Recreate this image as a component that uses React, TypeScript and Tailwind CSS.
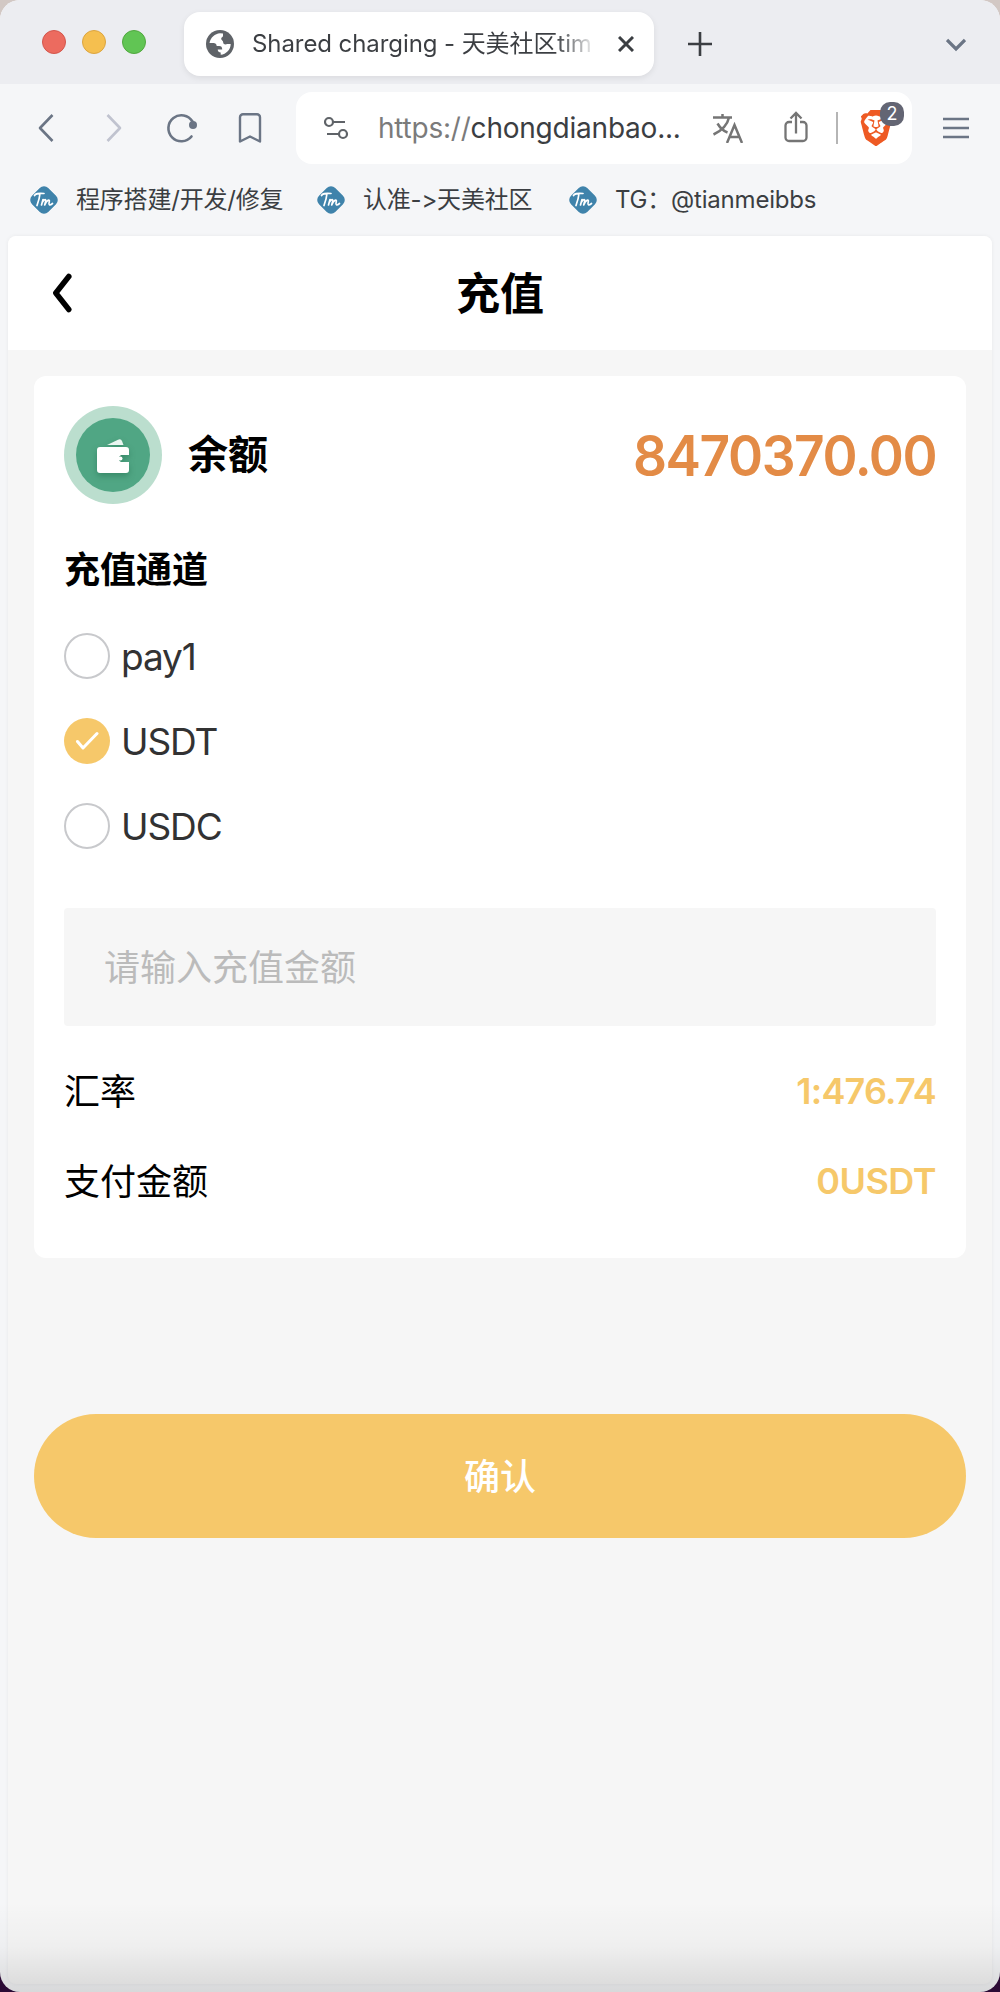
import { SiBrave } from 'react-icons/si'

const bookmarks = [
  { label: '程序搭建/开发/修复', width: 'w-[287px]' },
  { label: '认准->天美社区', width: 'w-[252px]' },
  { label: 'TG：@tianmeibbs', width: 'w-[260px]' },
]

const channels = ['pay1', 'USDT', 'USDC']
const selected = 'USDT'

function TmLogo() {
  return (
    <svg width="32" height="32" viewBox="0 0 32 32" className="shrink-0">
      <rect x="4.500" y="4.500" width="23" height="23" rx="6" fill="#3f83ab" transform="rotate(45 16 16)" />
      <g fill="none" stroke="#fff" strokeWidth="1.700" strokeLinecap="round" strokeLinejoin="round">
        <path d="M6.500 11.500c1-2 3-2.300 9.500-2M12 9.500c-.4 4-1.500 8-3 12" />
        <path d="M15 15.500l-1.500 5.500M14.500 18c2-3.500 4-3 3 0l-.8 3c2-5 5.500-6.500 4.500-3-.8 3 .3 4 3.300 1.500" />
      </g>
    </svg>
  )
}

function TabBar() {
  return (
    <div className="flex h-[84px] items-center bg-[#ecedf1] pl-[42px] pr-[34px]">
      <div className="flex w-[142px] gap-4">
        <span className="size-6 rounded-full border border-[#d3564c] bg-[#ec6b5f]" />
        <span className="size-6 rounded-full border border-[#dca540] bg-[#f5bf4f]" />
        <span className="size-6 rounded-full border border-[#51a83f] bg-[#61c554]" />
      </div>
      <div className="mt-1 flex h-16 w-[470px] items-center rounded-2xl bg-white pl-[22px] shadow-[0_2px_6px_rgba(0,0,0,0.08)]">
        <svg width="28" height="28" viewBox="0 0 28 28" className="mr-[18px] shrink-0">
          <circle cx="14" cy="14" r="14" fill="#5f6368" />
          <path
            d="M3.500 13C4.500 7.500 9 3.700 14 3.300l3 .2v2.300c0 1.500-1.800 1.500-1.800 3 0 1.700 2 1.700 2 3.700 0 2 2.500 2.500 4 1.500h3.500c0 5.500-4.500 10.300-10 10.800v-2.300c-1.600 0-3-1-3-3h4.500c0-2.500-1-3.500-3-3.500h-2.500c0-2-1.500-3-3.200-3z"
            fill="#fff"
          />
        </svg>
        <div className="w-[344px] whitespace-nowrap bg-gradient-to-r from-[#3b3e42] from-88% to-white bg-clip-text text-[24px] leading-8 tracking-[-0.080px] text-transparent">
          Shared charging - 天美社区tim
        </div>
        <svg width="16" height="16" viewBox="0 0 16 16" fill="none" stroke="#3b3e42" strokeWidth="3" className="ml-[22px] shrink-0">
          <path d="M1 1l14 14M15 1L1 15" />
        </svg>
      </div>
      <svg width="24" height="24" viewBox="0 0 24 24" fill="none" stroke="#3b3e42" strokeWidth="2.600" className="ml-[34px] mt-1">
        <path d="M12 0v24M0 12h24" />
      </svg>
      <svg width="20" height="14" viewBox="0 0 20 14" fill="none" stroke="#6b7585" strokeWidth="3.300" className="ml-auto mt-[6px]">
        <path d="M1 2l9 9 9-9" />
      </svg>
    </div>
  )
}

function Toolbar() {
  return (
    <div className="flex h-[88px] items-center pl-[38px] pr-[30px]">
      <svg width="16" height="28" viewBox="0 0 16 28" fill="none" stroke="#6b7585" strokeWidth="2.600" strokeLinejoin="round">
        <path d="M14.500 1L2 14l12.500 13" />
      </svg>
      <svg width="16" height="28" viewBox="0 0 16 28" fill="none" stroke="#c0c3cf" strokeWidth="2.600" strokeLinejoin="round" className="ml-[52px]">
        <path d="M1.500 1L14 14 1.500 27" />
      </svg>
      <svg width="32" height="30" viewBox="0 0 32 30" fill="none" stroke="#6b7585" strokeWidth="2.600" className="ml-[44px]">
        <path d="M25.500 23.500A13 13 0 1 1 26.500 8.500" strokeLinecap="round" />
        <circle cx="27" cy="12" r="4" fill="#6b7585" stroke="none" />
      </svg>
      <svg width="24" height="32" viewBox="0 0 24 32" fill="none" stroke="#6b7585" strokeWidth="2.400" strokeLinejoin="round" className="ml-[40px]">
        <path d="M5 2.200h14a3 3 0 0 1 3 3V29.500L12 24.500 2 29.500V5.200a3 3 0 0 1 3-3z" />
      </svg>

      <div className="ml-[34px] flex h-[72px] w-[616px] items-center rounded-2xl bg-white pl-7">
        <svg width="26" height="24" viewBox="0 0 26 24" fill="none" stroke="#5f6368" strokeWidth="2.200" className="shrink-0">
          <circle cx="5" cy="6" r="4" />
          <path d="M9 6h12M3 18h12" />
          <circle cx="19" cy="18" r="4" />
        </svg>
        <div className="ml-7 w-[314px] whitespace-nowrap text-[28px] tracking-[-0.220px] text-[#3b3e42]">
          <span className="text-[#7b7b7b]">https://</span>chongdianbao...
        </div>
        <svg width="32" height="30" viewBox="0 0 32 30" fill="none" stroke="#757575" strokeWidth="2.500" className="ml-[20px] shrink-0">
          <path d="M1 4.500h19M10.500 1v3.500M5.500 10.500c3 5 6 7.500 10 9M17 4.500c-1.500 7-7 13-15.500 17" />
          <path d="M15 30l7.500-18L30 30M17.500 24h10" />
        </svg>
        <svg width="24" height="32" viewBox="0 0 24 32" fill="none" stroke="#757575" strokeWidth="2.300" className="-mt-[2px] ml-[40px] shrink-0">
          <path d="M8 11H5a3.500 3.500 0 0 0-3.500 3.500v12A3.500 3.500 0 0 0 5 30h14a3.500 3.500 0 0 0 3.500-3.500v-12A3.500 3.500 0 0 0 19 11h-3" />
          <path d="M12 22.500V2.500M6.500 7.500L12 2l5.500 5.500" />
        </svg>
        <span className="ml-[28px] h-8 w-[2px] shrink-0 bg-[#b5b5b5]" />
        <div className="relative ml-[20px] shrink-0">
          <SiBrave size={36} color="#ee5a24" />
          <span className="absolute -top-[8px] left-[22px] flex h-6 w-6 items-center justify-center rounded-[10px] bg-[#636573] text-[18px] leading-none text-white">
            2
          </span>
        </div>
      </div>

      <svg width="28" height="22" viewBox="0 0 28 22" fill="none" stroke="#6b7585" strokeWidth="2.400" className="ml-auto">
        <path d="M1 2h26M1 11h26M1 20h26" />
      </svg>
    </div>
  )
}

function Header() {
  return (
    <div className="flex h-[114px] items-center justify-between rounded-t-lg bg-white px-[44px]">
      <svg width="20" height="40" viewBox="0 0 20 40" fill="none" stroke="#000" strokeWidth="5.500" strokeLinecap="round" strokeLinejoin="round">
        <path d="M16.800 3.500L3.800 20l13 16.500" />
      </svg>
      <h1 className="pt-[2px] text-[44px] font-bold text-black">充值</h1>
      <span className="w-5" />
    </div>
  )
}

function Wallet() {
  return (
    <div className="flex size-[98px] items-center justify-center rounded-full bg-[#bbdece]">
      <div className="flex size-[74px] items-center justify-center rounded-full bg-[#50a684]">
        <svg width="32" height="34" viewBox="0 0 32 34" className="mt-[2px] overflow-visible drop-shadow-[0_3px_3px_rgba(0,70,40,0.3)]">
          <path d="M10 6l11-5.300q3-1.200 4 1.300l1.500 4z" fill="#eaf6f1" />
          <path d="M3 8h26a3 3 0 0 1 3 3v5h-8a4 4 0 0 0 0 7h8v8a3 3 0 0 1-3 3H3a3 3 0 0 1-3-3V11a3 3 0 0 1 3-3z" fill="#fff" />
          <circle cx="23.500" cy="19.500" r="2" fill="#fff" />
        </svg>
      </div>
    </div>
  )
}

function Channel({ name, checked }: { name: string; checked: boolean }) {
  return (
    <div className="flex h-[46px] items-center gap-[11px]">
      {checked ? (
        <span className="flex size-[46px] items-center justify-center rounded-full bg-[#f6c86a]">
          <svg width="24" height="20" viewBox="0 0 24 20" fill="none" stroke="#fff" strokeWidth="3" strokeLinecap="round" strokeLinejoin="round">
            <path d="M2.500 10.500l5.500 6.500L22 2.500" />
          </svg>
        </span>
      ) : (
        <span className="size-[46px] rounded-full border-2 border-[#c8c9cc]" />
      )}
      <span className="text-[37px] tracking-[-1.100px] text-[#323233]">{name}</span>
    </div>
  )
}

export default function App() {
  return (
    <div className="h-[1992px] w-[1000px] overflow-hidden bg-[linear-gradient(#d2c8c4_50%,#2b0a35_50%)] font-[Inter,'Noto_Sans_CJK_SC',sans-serif] leading-none [font-feature-settings:'calt'_0]">
      <div className="relative flex h-full flex-col overflow-hidden rounded-[20px] bg-[#f5f6f8]">
        <TabBar />
        <Toolbar />
        <div className="flex h-16 items-center pb-2 pl-7 text-[24px] tracking-[-0.200px] text-[#3b3e42]">
          {bookmarks.map((b) => (
            <div key={b.label} className={`flex items-center gap-4 whitespace-nowrap ${b.width}`}>
              <TmLogo />
              <span>{b.label}</span>
            </div>
          ))}
        </div>

        <main className="mx-2 mb-2 flex-1 rounded-lg bg-[#f6f6f6] shadow-[0_0_4px_rgba(0,0,0,0.06)]">
          <Header />
          <section className="mx-[26px] mt-[26px] h-[882px] rounded-xl bg-white px-[30px] pt-[30px]">
            <div className="flex items-center">
              <Wallet />
              <span className="ml-[26px] text-[40px] font-bold text-black">余额</span>
              <span className="ml-auto origin-right scale-x-95 pt-px text-[56px] font-semibold tracking-[-1.500px] text-[#e38b46]">
                8470370.00
              </span>
            </div>
            <h2 className="mt-[48px] text-[36px] font-bold leading-[36px] text-black">充值通道</h2>
            <div className="mt-[45px] flex flex-col gap-[39px]">
              {channels.map((c) => (
                <Channel key={c} name={c} checked={c === selected} />
              ))}
            </div>
            <input
              className="mt-[59px] h-[118px] w-full rounded bg-[#f6f6f6] px-10 pt-[2px] text-[36px] outline-none placeholder:text-[#bbbbbb]"
              placeholder="请输入充值金额"
            />
            <div className="mt-[48px] flex h-9 items-center justify-between text-[36px] text-black">
              <span>汇率</span>
              <span className="pb-[2px] font-semibold tracking-[-0.800px] text-[#f6c86a]">1:476.74</span>
            </div>
            <div className="mt-[54px] flex h-9 items-center justify-between text-[36px] text-black">
              <span>支付金额</span>
              <span className="pb-[2px] font-semibold tracking-[-0.500px] text-[#f6c86a]">0USDT</span>
            </div>
          </section>
          <button className="mx-[26px] mt-[156px] block h-[124px] w-[932px] rounded-full bg-[#f6c86a] pt-px text-[36px] font-medium text-white">
            确认
          </button>
        </main>
        <div className="pointer-events-none absolute inset-x-0 bottom-0 h-[90px] bg-gradient-to-b from-black/0 via-black/3 to-black/12" />
      </div>
    </div>
  )
}
